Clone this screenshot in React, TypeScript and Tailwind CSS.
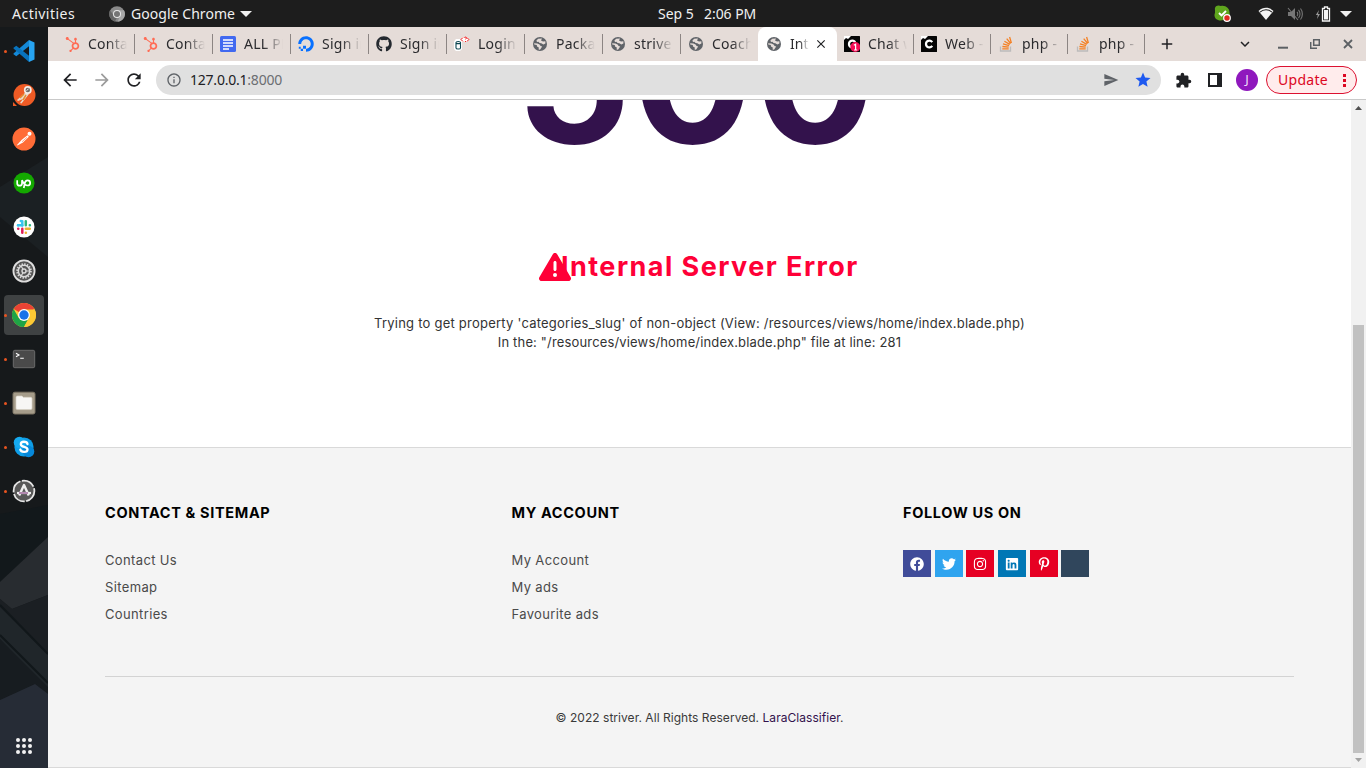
import type { ReactNode } from "react";
import { FaFacebook, FaTwitter, FaInstagram, FaLinkedin, FaPinterestP, FaHubspot, FaGithub, FaStackOverflow } from "react-icons/fa";
import { FaTriangleExclamation, FaDigitalOcean } from "react-icons/fa6";
import { MdArrowBack, MdArrowForward, MdRefresh, MdInfoOutline, MdSend, MdStar, MdExtension, MdAdd, MdClose, MdExpandMore } from "react-icons/md";

const Globe = () => (
  <svg viewBox="0 0 16 16" className="size-4">
    <circle cx="8" cy="8" r="7" fill="#5f6368" />
    <path d="M6.2 2.8 10 2.6 9 4.4 11 5.6 13.4 5.2 13.4 7.4 11.4 8.6 9.3 7.2 7.6 7 6.4 5.8 5 6 4.4 4.6Z" fill="#e5dcd8" />
    <path d="M2.2 7.2 5.4 7.4 7.6 8.4 8.6 10 10.2 10.4 9.2 12 8 13.8 6.6 13.6 6.8 11.6 5 10.6 4.8 9 2.2 8.6Z" fill="#e5dcd8" />
  </svg>
);

const Docs = () => (
  <svg viewBox="0 0 16 16" className="size-4">
    <rect width="16" height="16" rx="1.5" fill="#4169f0" />
    <path d="M3 4h10M3 7h10M3 10h10M3 13h6" stroke="#fff" strokeWidth="1.4" />
  </svg>
);

const Login = () => (
  <svg viewBox="0 0 16 16" className="size-4">
    <path d="M0 5.5 2 3h4l2 2v8l-2 2H2l-2-2Z" fill="#fff" />
    <path d="M8 1h6l1 3-2 2H7Z" fill="#fff" />
    <path d="M2 6.5c0-1.4 4.5-1.4 4.5 0v5.5c0 1.4-4.5 1.4-4.5 0ZM2 7c0 1 4.5 1 4.5 0" fill="#fff" stroke="#0b4650" strokeWidth="1.1" />
    <path d="m9 1.5-2 2 2 2M10.5 2c0-1.2 2-1.2 2 0l-1 1.4M11.4 5v1M13 1.5l1.8 2-1.8 2" fill="none" stroke="#e11" strokeWidth="1" />
  </svg>
);

const Black = ({ badge }: { badge?: boolean }) => (
  <svg viewBox="0 0 16 16" className="size-4">
    <rect width="16" height="16" rx=".5" fill="#050505" />
    <path d="M0 0h7L4 3 2 2 0 4Z" fill="#fff" />
    <path d="M11.2 6.1A3.4 3.4 0 1 0 11.2 9.9" fill="none" stroke="#fff" strokeWidth="2.3" />
    {badge && (
      <g>
        <circle cx="11.3" cy="11" r="5" fill="#f40d55" />
        <path d="m9.8 9.3 1.8-1V14M10 14h3.2" fill="none" stroke="#fff" strokeWidth="1.2" />
      </g>
    )}
  </svg>
);

const Stack = () => (
  <svg viewBox="0 0 16 16" className="size-4">
    <path d="M2.5 10.5V15h10v-4.5" fill="none" stroke="#bcbbbb" strokeWidth="1.3" />
    <path d="M4.3 12.9h6.4M4.4 10.5l6.3.7M5 7.9l6.1 1.7M6.4 5.2l5.4 3.2M8.7 2.6l4 4.9M11.6 1l1.8 6" stroke="#f48024" strokeWidth="1.3" />
  </svg>
);

type TabInfo = { icon: ReactNode; title: string; w: string };
const hub = <FaHubspot className="size-[15px] text-[#ff6c55]" />;
const leftTabs: TabInfo[] = [
  { icon: hub, title: "Contacts", w: "w-[78px]" },
  { icon: hub, title: "Contacts", w: "w-[78px]" },
  { icon: <Docs />, title: "ALL PRO", w: "w-[78px]" },
  { icon: <FaDigitalOcean className="size-4 text-[#0870ff]" />, title: "Sign in", w: "w-[78px]" },
  { icon: <FaGithub className="size-4 text-[#24292f]" />, title: "Sign in", w: "w-[78px]" },
  { icon: <Login />, title: "Login |", w: "w-[78px]" },
  { icon: <Globe />, title: "Packag", w: "w-[78px]" },
  { icon: <Globe />, title: "striver", w: "w-[78px]" },
  { icon: <Globe />, title: "Coachi", w: "w-[77px]" },
];
const rightTabs: TabInfo[] = [
  { icon: <Black badge />, title: "Chat w", w: "w-[77px]" },
  { icon: <Black />, title: "Web - C", w: "w-[77px]" },
  { icon: <Stack />, title: "php - H", w: "w-[77px]" },
  { icon: <Stack />, title: "php - H", w: "w-[77px]" },
];

const Tab = ({ tab, last }: { tab: TabInfo; last?: boolean }) => (
  <div className={`flex h-[34px] shrink-0 items-center ${tab.w}`}>
    <span className="ml-[7px] flex w-4 shrink-0 justify-center">{tab.icon}</span>
    <span className="ml-2 w-[39px] overflow-hidden whitespace-nowrap text-sm tracking-[0.25px] text-[#2b2b2e] [mask-image:linear-gradient(to_right,black_50%,transparent)]">{tab.title}</span>
    {!last && <span className="ml-auto h-5 w-px bg-[#8c8583]" />}
  </div>
);

const DockRow = ({ children, dot, active }: { children: ReactNode; dot?: boolean; active?: boolean }) => (
  <div className="flex h-11 w-12 items-center">
    <div className={`ml-1 flex h-10 w-10 items-center rounded ${active ? "bg-[#3f4243]" : ""}`}>
      <span className={`size-[3px] rounded-full ${dot ? "bg-[#e95420]" : ""}`} />
      <span className="ml-[5px] flex size-6 items-center justify-center">{children}</span>
    </div>
  </div>
);

const Dock = () => (
  <aside className="relative w-12 shrink-0 overflow-hidden bg-[#16191b]">
    <svg viewBox="0 0 48 741" className="absolute inset-0 h-[741px] w-12">
      <path d="M0 160 48 130V230L0 190Z" fill="#1b2023" />
      <path d="M0 487 48 478V510L0 555Z" fill="#12181b" />
      <path d="M0 555 48 510V568L12 582 0 572Z" fill="#282c30" />
      <path d="M0 572 12 582 48 568V630L0 582Z" fill="#1b1f23" />
      <path d="M0 580 48 628V665L0 612Z" fill="#20262a" />
      <path d="M0 612 48 660V668L35 657 0 673Z" fill="#171c20" />
      <path d="M0 673 35 657 48 667V741H0Z" fill="#262c36" />
      <path d="M0 578 48 627M0 608 48 656" stroke="#11171a" strokeWidth="2" />
    </svg>
    <div className="relative flex h-full flex-col pt-[2px]">
      <DockRow dot>
        <svg viewBox="0 0 24 24" className="size-6">
          <path d="M17 1 22.5 3.5V20.5L17 23Z" fill="#27a4f2" />
          <path d="M17 1V7.2L4.3 17.2 1.5 15.2V14.6L17 1Z" fill="#1489d8" />
          <path d="M17 23V16.8L4.3 6.8 1.5 8.8V9.4L17 23Z" fill="#0873bd" />
        </svg>
      </DockRow>
      <DockRow>
        <svg viewBox="0 0 24 24" className="size-6">
          <circle cx="12.5" cy="12" r="11" fill="#ef5b25" />
          <path d="M1 23v-4l4 4Z" fill="#ef5b25" />
          <path d="M14 9 5 17l1 1 5-2-3 4 1.5.5L17 11Z" fill="#e8dccf" />
          <path d="m12 11-4 4M14 12l-3 5" stroke="#e58b30" strokeWidth="1.5" />
          <circle cx="15.8" cy="7" r="3.9" fill="#f4eee8" />
          <circle cx="15.8" cy="7" r="2.3" fill="#706c6a" />
          <path d="m14.5 7.5 2-1.5" stroke="#eee" />
        </svg>
      </DockRow>
      <DockRow>
        <svg viewBox="0 0 24 24" className="size-6">
          <circle cx="12" cy="12" r="11.5" fill="#ff6c37" />
          <circle cx="17.5" cy="6.8" r="2" fill="#fff" />
          <path d="m15.5 8.3 1.4 1.4-6 5.8-5.4 3L5 18l4.5-5Z" fill="#fff" />
          <path d="m10 14.8 5-4.5" stroke="#ff6c37" strokeWidth=".6" />
        </svg>
      </DockRow>
      <DockRow>
        <svg viewBox="0 0 24 24" className="size-6">
          <circle cx="12" cy="12" r="10.5" fill="#14a800" />
          <path d="M5.2 9.2v3.2c0 3 4.8 3 4.8 0V9.2c1.5 3.5 3.2 5.3 5.5 5.3 3.6 0 3.6-5.2 0-5.2-1.8 0-2.5 1.4-2.9 3.5L11.8 17" fill="none" stroke="#fff" strokeWidth="1.7" />
        </svg>
      </DockRow>
      <DockRow>
        <svg viewBox="0 0 24 24" className="size-6">
          <circle cx="12" cy="12" r="10.5" fill="#fff" />
          <g strokeWidth="2.5" strokeLinecap="round">
            <path d="M10.3 6.2v4.2M6 10.3h.1M8.8 6h.1" stroke="#36c5f0" />
            <path d="M6.2 10.3h4" stroke="#36c5f0" />
            <path d="M13.8 6.2v4M17.8 10.3h.1" stroke="#2eb67d" />
            <path d="M13.8 13.8h4M13.8 17.8h.1" stroke="#ecb22e" />
            <path d="M10.3 13.8v4M6.2 13.8h.1" stroke="#e01e5a" />
          </g>
        </svg>
      </DockRow>
      <DockRow>
        <svg viewBox="0 0 24 24" className="size-6">
          <circle cx="12" cy="12" r="10.6" fill="#555" stroke="#dedede" strokeWidth="1.8" />
          <circle cx="12" cy="12" r="6.8" fill="none" stroke="#d8d8d8" strokeWidth="2" strokeDasharray="1.4 1.27" />
          <circle cx="12" cy="12" r="5.7" fill="none" stroke="#d8d8d8" strokeWidth="1.5" />
          <circle cx="12" cy="12" r="2" fill="none" stroke="#d8d8d8" strokeWidth="1.4" />
          <path d="M14 12h3.5M11 10.3 9.2 7.2M11 13.7l-1.8 3.1" stroke="#d8d8d8" strokeWidth="1.2" />
        </svg>
      </DockRow>
      <DockRow dot active>
        <svg viewBox="0 0 24 24" className="size-6">
          <circle cx="12" cy="12" r="12" fill="#fcc934" />
          <path d="M12 12 1.6 6A12 12 0 0 1 22.4 6Z" fill="#ea4335" />
          <path d="M1.6 6A12 12 0 0 0 12 24L17.2 15 12 12 6.8 15Z" fill="#1ea446" />
          <path d="M12 6.5H22.7A12 12 0 0 1 12 24L17 14.5Z" fill="#fcc934" />
          <circle cx="12" cy="12" r="5.9" fill="#fff" />
          <circle cx="12" cy="12" r="4.7" fill="#1a73e8" />
        </svg>
      </DockRow>
      <DockRow dot>
        <svg viewBox="0 0 24 24" className="size-6">
          <rect x="1.3" y="3.3" width="21.4" height="17.4" rx="1.5" fill="#4a4a4a" stroke="#6b6b6b" strokeWidth="1" />
          <path d="m4 6.2 3 1.8-3 1.8M8.2 11.2h3.6" fill="none" stroke="#fff" strokeWidth="1.1" />
        </svg>
      </DockRow>
      <DockRow dot>
        <svg viewBox="0 0 24 24" className="size-6">
          <rect x="1" y="1.2" width="22" height="21.8" rx="1.8" fill="#a59c8a" stroke="#7d7565" />
          <path d="M4 6.5c0-1 .6-1.5 1.5-1.5H10l1.3 1.3h7.2c1 0 1.5.6 1.5 1.5V17c0 1-.6 1.6-1.6 1.6H5.6c-1 0-1.6-.6-1.6-1.6Z" fill="#f7f6f4" stroke="#d8d2c6" strokeWidth=".7" />
        </svg>
      </DockRow>
      <DockRow dot>
        <svg viewBox="0 0 24 24" className="size-6">
          <circle cx="12" cy="12" r="9.6" fill="#0f9ee8" />
          <circle cx="7.5" cy="7.5" r="5.8" fill="#16aaf0" />
          <circle cx="16.5" cy="16.5" r="5.8" fill="#0688da" />
          <path d="M15.5 9c-.6-3-6.7-3.1-6.7.2 0 3.5 6.7 2 6.7 5.3 0 3.2-6.5 3.2-7.2 0" fill="none" stroke="#fff" strokeWidth="2.3" strokeLinecap="round" />
        </svg>
      </DockRow>
      <DockRow dot>
        <svg viewBox="0 0 24 24" className="size-6">
          <circle cx="12" cy="12" r="10.4" fill="#585858" stroke="#e6e6e6" strokeWidth="1.8" strokeDasharray="14 1.5" />
          <path d="M7.2 16.5 12 6l4.8 10.5" fill="none" stroke="#eee" strokeWidth="2.4" strokeLinejoin="round" />
          <path d="M5 14h14" stroke="#eee" strokeWidth="2.2" />
          <path d="M7 14h9" stroke="#762572" strokeWidth="1" />
        </svg>
      </DockRow>
      <div className="mt-auto mb-3.5 ml-4 grid w-4 grid-cols-3 gap-[2px]">
        {Array.from({ length: 9 }, (_, i) => (
          <span key={i} className="size-1 rounded-full bg-[#f2f2f2]" />
        ))}
      </div>
    </div>
  </aside>
);

const TopBar = () => (
  <header className="flex h-[27px] shrink-0 items-center bg-[#1d1d1d] text-sm text-[#f0f0f0]">
    <div className="flex w-[658px] items-center">
      <span className="ml-3 w-[97px] tracking-[0.48px]">Activities</span>
      <svg viewBox="0 0 16 16" className="size-4">
        <circle cx="8" cy="8" r="7.8" fill="#8a8a8a" />
        <path d="M8 4.2h7A7.8 7.8 0 0 1 8.6 15.8L11.5 9Z" fill="#a8a8a8" />
        <path d="M1 4.3 5 10l3 1.5-2 4A7.8 7.8 0 0 1 1 4.3Z" fill="#666" />
        <circle cx="8" cy="8" r="4" fill="#e8e8e8" />
        <circle cx="8" cy="8" r="3" fill="#757575" />
      </svg>
      <span className="ml-[6px] tracking-[0.05px]">Google Chrome</span>
      <svg viewBox="0 0 12 6" className="ml-[5px] h-[6px] w-3"><path d="M0 0h12L6 6Z" fill="#f0f0f0" /></svg>
    </div>
    <span className="w-[46px]">Sep 5</span>
    <span className="tracking-[-0.05px]">2:06 PM</span>
    <div className="ml-auto flex items-center pr-[14px]">
      <svg viewBox="0 0 17 17" className="mr-[27px] size-[17px]">
        <path d="M1 5C0 1 4-.5 7 1c5-1 9 3 8.500 7 1.500 5-2 8-6 7C3 17-1 12 1 8Z" fill="#5fa51d" />
        <path d="m5 8 2.500 2.500L12 6" fill="none" stroke="#fff" strokeWidth="1.900" />
        <circle cx="13" cy="13" r="3.300" fill="#e02b20" stroke="#fff" strokeWidth="1.200" />
      </svg>
      <svg viewBox="0 0 16 13" className="mr-[13px] h-[13px] w-4">
        <path d="M.5 4C5-.2 11-.2 15.500 4L8 13Z" fill="#f4f4f4" />
        <path d="M2 5.200C5.500 2 10.500 2 14 5.200" fill="none" stroke="#1d1d1d" strokeWidth="1.100" />
      </svg>
      <svg viewBox="0 0 16 14" className="mr-[12px] h-[14px] w-4">
        <path d="M1 5h3l4-4v12L4 9H1Z" fill="#777" />
        <path d="M1 1 11 13M10 5c1 1 1 3 0 4M11.500 3c2 2 2 6 0 8M13.500 1.500c2.500 3 2.500 8 0 11" fill="none" stroke="#777" strokeWidth="1.100" />
      </svg>
      <svg viewBox="0 0 16 16" className="mr-[9px] h-4 w-4">
        <path d="M4 4 .8 9h2L2 13l3-5H3Z" fill="#999" />
        <path d="M9.500 1h3v1.500h2V15h-7V2.500h2Z" fill="none" stroke="#f4f4f4" strokeWidth="1.300" />
        <path d="M9 4h4v9.500H9Z" fill="#f4f4f4" />
      </svg>
      <svg viewBox="0 0 12 6" className="h-[6px] w-3"><path d="M0 0h12L6 6Z" fill="#f0f0f0" /></svg>
    </div>
  </header>
);

const TabStrip = () => (
  <div className="flex h-[34px] shrink-0 items-center overflow-hidden bg-[#e5dcd8] pl-[9px]">
    {leftTabs.map((t, i) => <Tab key={i} tab={t} last={i === leftTabs.length - 1} />)}
    <div className="flex h-[34px] w-[79px] shrink-0 items-center rounded-t-lg bg-white">
      <span className="ml-2"><Globe /></span>
      <span className="ml-2 w-[19px] overflow-hidden whitespace-nowrap text-sm text-[#2b2b2e] [mask-image:linear-gradient(to_right,black_50%,transparent)]">Inter</span>
      <MdClose className="ml-[5px] size-[14px] text-[#202124]" />
    </div>
    {rightTabs.map((t, i) => <Tab key={i} tab={t} />)}
    <MdAdd className="ml-[13px] size-[18px] shrink-0 text-[#202124]" />
    <MdExpandMore className="ml-auto size-[18px] shrink-0 text-[#202124]" />
    <svg viewBox="0 0 10 12" className="ml-[24px] h-3 w-[10px] shrink-0"><path d="M0 9.700h10" stroke="#5c6064" strokeWidth="2" /></svg>
    <svg viewBox="0 0 10 10" className="ml-[22px] size-[10px] shrink-0"><path d="M3.700.7h5.600v5.600H3.700ZM.7 3v6.300H7" fill="none" stroke="#5c6064" strokeWidth="1.500" /></svg>
    <svg viewBox="0 0 10 10" className="mr-[13px] ml-[23px] size-[10px] shrink-0"><path d="m1 1 8 8M9 1 1 9" stroke="#5c6064" strokeWidth="1.800" /></svg>
  </div>
);

const Toolbar = () => (
  <div className="flex h-[39px] shrink-0 items-center border-b border-[#c9c9c9] bg-white">
    <MdArrowBack className="ml-[12px] size-5 text-[#202124]" />
    <MdArrowForward className="ml-3 size-5 text-[#9b9b9b]" />
    <MdRefresh className="ml-3 size-5 text-[#202124]" />
    <div className="ml-3 flex h-[30px] w-[1005px] items-center rounded-full bg-[#e0e0e0]">
      <MdInfoOutline className="ml-[10px] size-4 text-[#5f6368]" />
      <span className="ml-2 text-sm tracking-[-0.22px] text-[#202124]">127.0.0.1<span className="text-[#6b6e72]">:8000</span></span>
      <MdSend className="ml-auto size-4 text-[#5f6368]" />
      <MdStar className="mr-[9px] ml-[15px] size-[18px] text-[#1f5af0]" />
    </div>
    <MdExtension className="ml-[14px] size-[17px] text-[#202124]" />
    <svg viewBox="0 0 14 14" className="ml-4 size-[14px]"><path d="M1 1h12v12H1Z" fill="#fff" stroke="#202124" strokeWidth="2" /><path d="M9 1h5v12H9Z" fill="#202124" /></svg>
    <span className="ml-[14px] flex size-[22px] items-center justify-center rounded-full bg-[#8f18bd] text-[13px] text-[#f2dcfa]">J</span>
    <span className="ml-2 flex h-[28px] w-[91px] items-center rounded-full border border-[#dc1030] bg-[#ffecec] pl-[11px] text-sm tracking-[0.3px] text-[#dc0722]">
      Update
      <svg viewBox="0 0 3 13" className="ml-[15px] h-[13px] w-[3px]"><path d="M0 0h3v3H0ZM0 5h3v3H0ZM0 10h3v3H0Z" fill="#dc0722" /></svg>
    </span>
  </div>
);

const FooterColumn = ({ title, width, children }: { title: string; width: string; children: ReactNode }) => (
  <div className={width}>
    <h3 className="text-[14.5px] leading-5 font-bold tracking-[0.65px] whitespace-nowrap text-black">{title}</h3>
    {children}
  </div>
);

const Links = ({ items }: { items: string[] }) => (
  <ul className="mt-6 text-[13px] leading-[27px] tracking-[0.36px] text-[#4a4a4a]">
    {items.map((x) => <li key={x}>{x}</li>)}
  </ul>
);

const Social = () => (
  <div className="mt-[27px] flex gap-[3.700px] text-sm text-white">
    <span className="flex h-[27px] w-7 items-center justify-center bg-[#404c99]"><FaFacebook /></span>
    <span className="flex h-[27px] w-7 items-center justify-center bg-[#2fa4ef]"><FaTwitter /></span>
    <span className="flex h-[27px] w-7 items-center justify-center bg-[#e60023]"><FaInstagram /></span>
    <span className="flex h-[27px] w-7 items-center justify-center bg-[#0077b5]"><FaLinkedin /></span>
    <span className="flex h-[27px] w-7 items-center justify-center bg-[#e60023]"><FaPinterestP /></span>
    <span className="h-[27px] w-7 bg-[#30465c]" />
  </div>
);

const Page = () => (
  <main className="flex min-w-0 flex-1 flex-col bg-white font-['Inter',sans-serif]">
    <div className="flex h-[68px] shrink-0 items-end overflow-hidden pl-[468px]">
      <span className="text-[180px] leading-none font-bold tracking-[1px] text-[#33124c]">500</span>
    </div>
    <div className="mt-[79px] flex h-10 items-center pl-[491px] text-[#ff0037]">
      <FaTriangleExclamation className="size-8 shrink-0" />
      <h1 className="-ml-[10px] text-[27px] font-bold tracking-[1.450px] whitespace-nowrap">Internal Server Error</h1>
    </div>
    <div className="mt-[27px] text-center text-[13px] leading-[19px] text-[#333]">
      <p className="tracking-[0.230px]">Trying to get property 'categories_slug' of non-object (View: /resources/views/home/index.blade.php)</p>
      <p className="tracking-[0.160px]">In the: "/resources/views/home/index.blade.php" file at line: 281</p>
    </div>
    <footer className="mt-auto h-[321px] border-y border-[#d9d9d9] bg-[#f4f4f4] px-[57px] pt-[55px]">
      <div className="flex h-[174px] border-b border-[#d3d3d3]">
        <FooterColumn title="CONTACT & SITEMAP" width="w-[406.500px]">
          <Links items={["Contact Us", "Sitemap", "Countries"]} />
        </FooterColumn>
        <FooterColumn title="MY ACCOUNT" width="w-[391.500px]">
          <Links items={["My Account", "My ads", "Favourite ads"]} />
        </FooterColumn>
        <FooterColumn title="FOLLOW US ON" width="w-[390px]">
          <Social />
        </FooterColumn>
      </div>
      <p className="mt-8 text-center text-xs leading-[18px] tracking-[0.040px] text-[#3a3a3a]">
        © 2022 striver. All Rights Reserved. <span className="text-[#33124c]">LaraClassifier</span>.
      </p>
    </footer>
  </main>
);

const Scrollbar = () => (
  <div className="flex w-[15px] shrink-0 flex-col items-center bg-[#f1f1f1]">
    <svg viewBox="0 0 7 4" className="mt-[6px] h-1 w-[7px]"><path d="M0 4h7L3.500 0Z" fill="#505050" /></svg>
    <div className="mt-[215px] h-[428px] w-[11px] bg-[#c1c1c1]" />
    <svg viewBox="0 0 7 4" className="mt-[5px] h-1 w-[7px]"><path d="M0 0h7L3.500 4Z" fill="#a3a3a3" /></svg>
  </div>
);

export default function App() {
  return (
    <div className="flex h-[768px] w-[1366px] flex-col overflow-hidden font-['Noto_Sans',sans-serif]">
      <TopBar />
      <div className="flex min-h-0 flex-1">
        <Dock />
        <div className="flex min-w-0 flex-1 flex-col">
          <TabStrip />
          <Toolbar />
          <div className="flex min-h-0 flex-1">
            <Page />
            <Scrollbar />
          </div>
        </div>
      </div>
    </div>
  );
}
